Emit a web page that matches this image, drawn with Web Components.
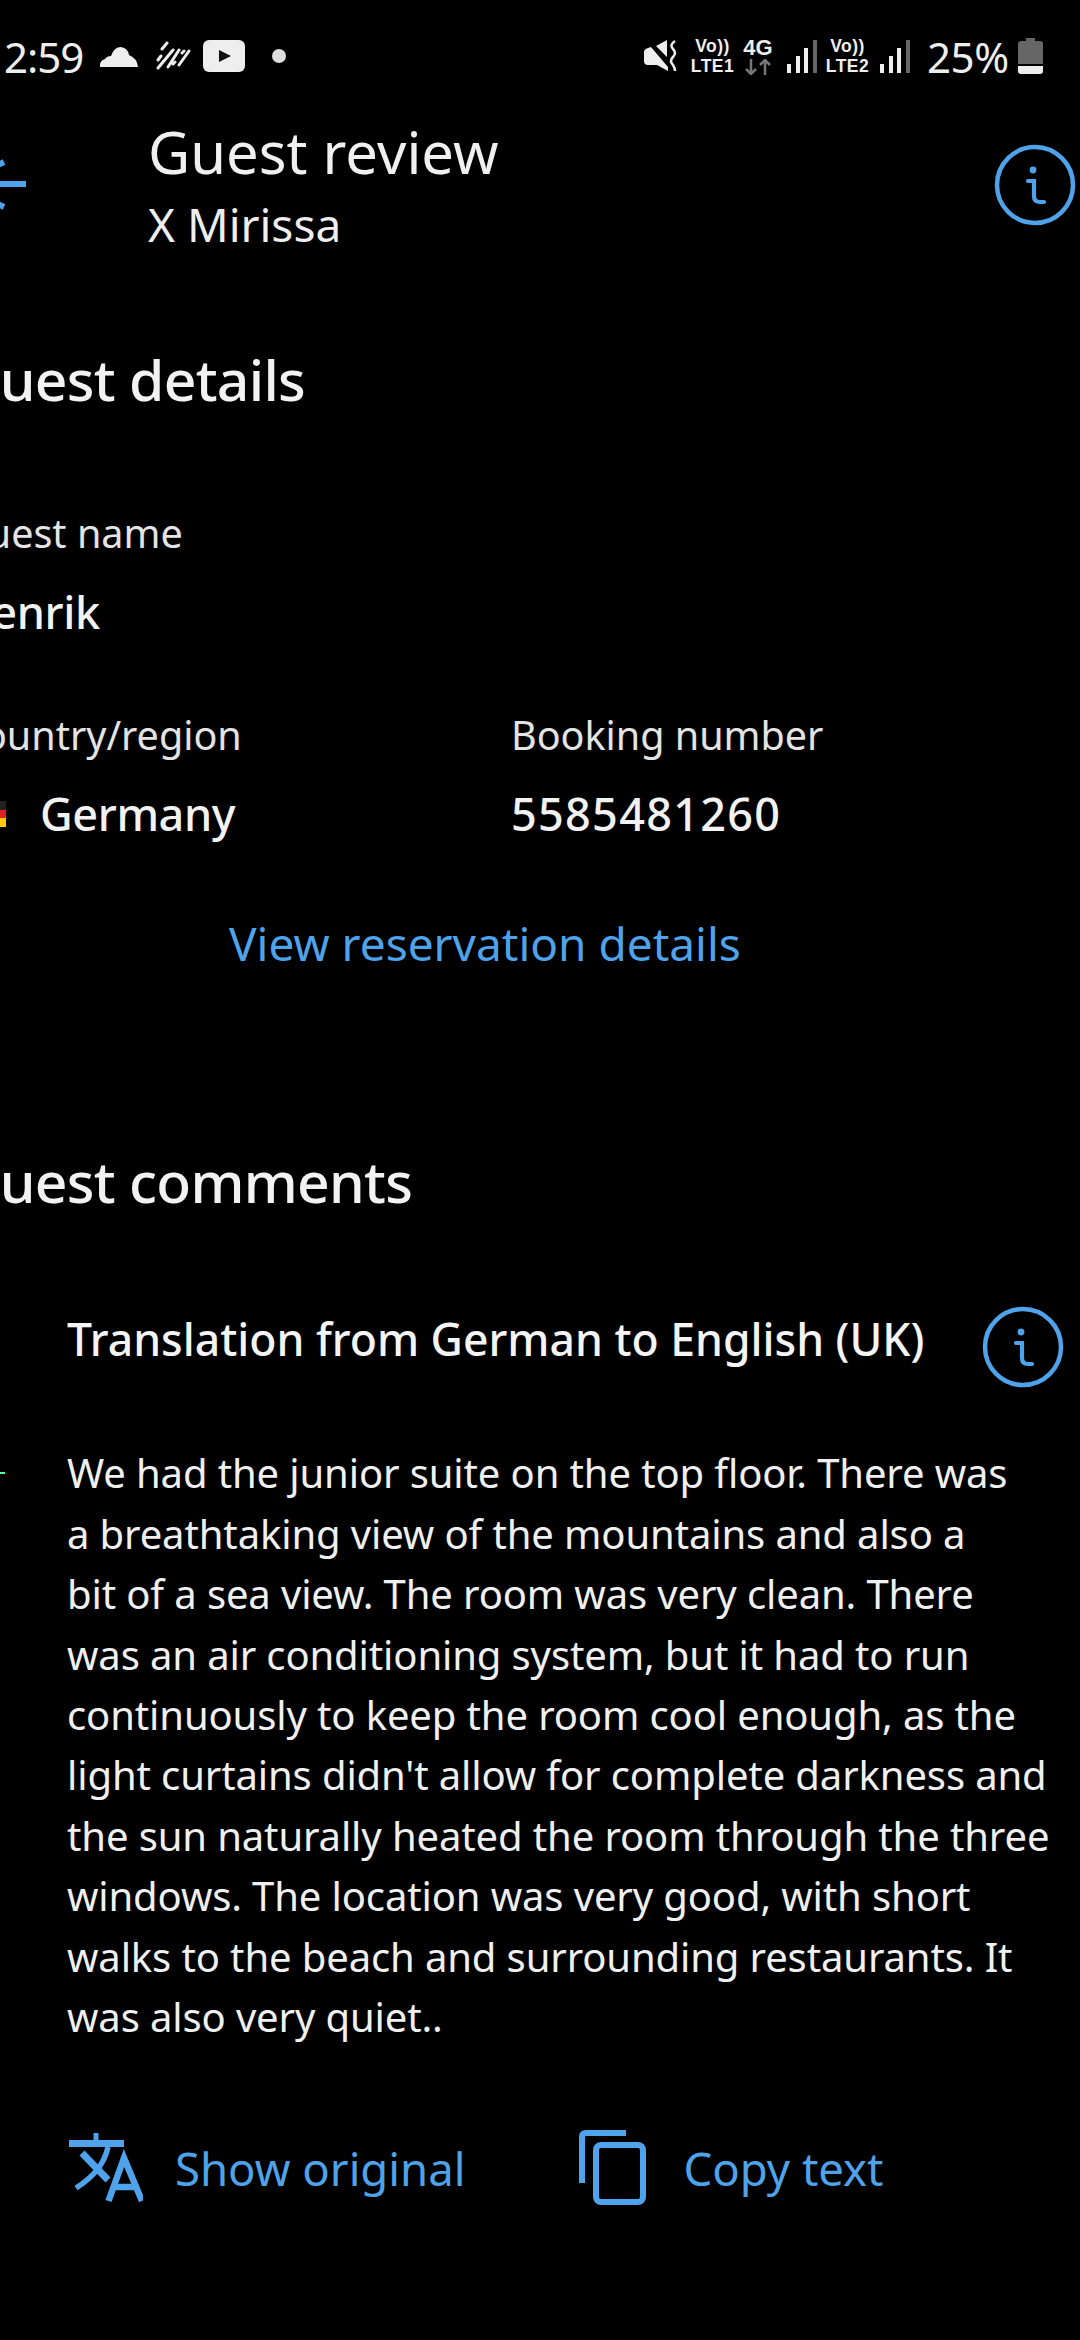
<!DOCTYPE html>
<html>
<head>
<meta charset="utf-8">
<style>
    html, body { margin: 0; background: #000; }
    body { width: 1080px; height: 2340px; overflow: hidden; font-family: "Noto Sans", sans-serif; color: #f2f2f2; }
</style>
</head>
<body>
<review-page></review-page>

<script>
var FONT = `"Noto Sans", "Open Sans", sans-serif`
var BLUE = "#4fa3ea"

var infoIcon = `
<svg viewBox="0 0 82 82" width="82" height="82" fill="none" stroke="${BLUE}" stroke-linecap="round" style="display:block">
    <circle cx="41" cy="41" r="38" stroke-width="4.5"/>
    <circle cx="39" cy="26" r="3.4" fill="${BLUE}" stroke="none"/>
    <path d="M34 37 H40 V52 Q40 58 46 58 H50" stroke-width="4.2"/>
</svg>`

var signalBars = `
<rect x="0" y="24" width="4" height="9" fill="#eee"/><rect x="9" y="16" width="4" height="17" fill="#eee"/><rect x="17" y="8" width="4" height="25" fill="#eee"/><rect x="26" y="0" width="4" height="33" fill="#666"/>`

class StatusBar extends HTMLElement {
    constructor() {
        super()
        this.attachShadow({ mode: "open" }).innerHTML = `
<style>
    :host { display: flex; justify-content: space-between; align-items: center; height: 56px; padding: 28px 37px 0 4px; color: #eee; font-family: ${FONT}; }
    .left, .right { display: flex; align-items: center; }
    .time { font-size: 42px; letter-spacing: -1px; margin-right: 16px; }
    .left svg { display: block; }
    .net { display: flex; flex-direction: column; align-items: center; font-family: "Liberation Sans", sans-serif; font-size: 17.5px; line-height: 20px; font-weight: 700; letter-spacing: 0.5px; }
    .pct { display: inline-block; width: 83px; font-size: 42px; letter-spacing: -0.4px; margin: 0 8px 0 17px; white-space: nowrap; }
    .g4 { font-family: "Liberation Sans", sans-serif; font-size: 22px; line-height: 22px; font-weight: 700; }
    .stack { display: flex; flex-direction: column; align-items: center; width: 28px; margin-left: 10px; }
</style>
<div class="left">
    <span class="time">2:59</span>
    <svg width="40" height="24" viewBox="0 0 40 24" fill="#eee"><path d="M1 23 Q0 17 6 15 Q8 12 12 12 Q15 3 22 3 Q29 4 30 11 Q38 14 39 23 Z"/></svg>
    <svg width="36" height="32" viewBox="0 0 36 32" stroke="#eee" stroke-width="3" stroke-linecap="round" style="margin-left:16px"><path d="M12 3 L7 9 M18 10 L3 28 M24 10 L13 27 M34 11 L24 25 M6 16 L3 20 M20 22 L18 24 M29 11 L27 13"/></svg>
    <svg width="42" height="32" viewBox="0 0 42 32" style="margin-left:12px"><rect width="42" height="32" rx="6" fill="#eee"/><path d="M16 10 L28 16 L16 22 Z" fill="#111"/></svg>
    <svg width="14" height="14" viewBox="0 0 14 14" style="margin-left:27px"><circle cx="7" cy="7" r="7" fill="#ddd"/></svg>
</div>
<div class="right">
    <svg width="33" height="34" viewBox="0 0 33 34" fill="#eee" style="margin-right:14px"><path d="M0 13 Q0 10 4 9 L7 8 L24 28 V32 L13 26 H4 Q0 26 0 22 Z M12 7 L23 1 V18 Z"/><path d="M31 2 Q25 6 29 10 Q33 14 29 18 Q25 22 29 26 Q31 29 31 32" fill="none" stroke="#eee" stroke-width="2.5"/></svg>
    <div class="net" style="width:43px"><span>Vo))</span><span>LTE1</span></div>
    <div class="stack"><span class="g4">4G</span><svg width="28" height="16" viewBox="0 0 28 16" fill="none" stroke="#777" stroke-width="2.5"><path d="M7 0 V15 M2 10 L7 15 L12 10 M21 16 V1 M16 6 L21 1 L26 6"/></svg></div>
    <svg width="30" height="33" viewBox="0 0 30 33" style="margin-left:15px">${signalBars}</svg>
    <div class="net" style="width:45px;margin-left:8px"><span>Vo))</span><span>LTE2</span></div>
    <svg width="30" height="33" viewBox="0 0 30 33" style="margin-left:10px">${signalBars}</svg>
    <span class="pct">25%</span>
    <svg width="25" height="36" viewBox="0 0 25 36"><path d="M8 0 H17 V3 H22 Q25 3 25 6 V26 H0 V6 Q0 3 3 3 H8 Z" fill="#666"/><path d="M0 28 H25 V33 Q25 36 22 36 H3 Q0 36 0 33 Z" fill="#eee"/></svg>
</div>`
    }
}

class AppHeader extends HTMLElement {
    constructor() {
        super()
        this.attachShadow({ mode: "open" }).innerHTML = `
<style>
    :host { display: flex; align-items: flex-start; padding-left: 148px; padding-right: 4px; font-family: ${FONT}; }
    .back { position: absolute; left: 0; top: 155px; }
    .titles { flex: 1; }
    .title { font-size: 58px; line-height: 72px; color: #f0f0f0; }
    .sub { font-size: 46px; line-height: 64px; margin-top: 4px; color: #eee; }
    .info { margin-top: 28px; }
</style>
<svg class="back" width="28" height="60" viewBox="0 0 28 60" fill="none" stroke="${BLUE}" stroke-width="6"><path d="M0 29 H26"/><path d="M-4 11 L4 7 M-4 48 L4 52"/></svg>
<div class="titles">
    <div class="title">Guest review</div>
    <div class="sub">X Mirissa</div>
</div>
<div class="info">${infoIcon}</div>`
    }
}

class SectionTitle extends HTMLElement {
    constructor() {
        super()
        this.attachShadow({ mode: "open" }).innerHTML = `
<style>
    :host { display: block; font-family: ${FONT}; font-size: 57px; line-height: 72px; font-weight: 500; color: #f2f2f2; letter-spacing: -0.7px; margin-left: -41px; }
</style>
<slot></slot>`
    }
}

class FieldItem extends HTMLElement {
    constructor() {
        super()
        this.attachShadow({ mode: "open" }).innerHTML = `
<style>
    :host { display: block; font-family: ${FONT}; }
    .label { font-size: 39.5px; line-height: 56px; color: #e4e4e4; }
    .value { display: flex; align-items: center; font-size: 45px; line-height: 60px; margin-top: 21px; font-weight: 500; color: #f2f2f2; letter-spacing: -0.4px; }
</style>
<div class="label"><slot name="label"></slot></div>
<div class="value"><slot></slot></div>`
    }
}

class ActionLink extends HTMLElement {
    constructor() {
        super()
        this.attachShadow({ mode: "open" }).innerHTML = `
<style>
    :host { display: flex; align-items: center; font-family: ${FONT}; font-size: 45.5px; color: ${BLUE}; line-height: 60px; }
    ::slotted(svg) { display: block; }
</style>
<slot></slot>`
    }
}

class CommentCard extends HTMLElement {
    constructor() {
        super()
        this.attachShadow({ mode: "open" }).innerHTML = `
<style>
    :host { display: block; font-family: ${FONT}; padding-left: 67px; position: relative; }
    .head { display: flex; align-items: center; height: 82px; }
    .head-title { font-size: 44.5px; font-weight: 500; color: #f4f4f4; width: 915px; margin-top: -18px; white-space: nowrap; }
    .body { font-size: 40px; line-height: 60.4px; color: #f0f0f0; margin-top: -5px; white-space: pre-line; letter-spacing: -0.12px; }
    .actions { display: flex; margin-top: 83px; }
    .tick { position: absolute; left: 0; top: 166px; width: 5px; height: 2px; background: #5fa; }
</style>
<div class="tick"></div>
<div class="head"><span class="head-title"><slot name="title"></slot></span>${infoIcon}</div>
<div class="body"><slot></slot></div>
<div class="actions"><slot name="actions"></slot></div>`
    }
}

class ReviewPage extends HTMLElement {
    constructor() {
        super()
        this.attachShadow({ mode: "open" }).innerHTML = `
<style>
    :host { display: block; position: relative; width: 1080px; height: 2340px; overflow: hidden; background: #000; }
    app-header { margin-top: 32px; }
    section-title.details { margin-top: 87px; }
    .name { margin: 90px 0 0 -42px; }
    .row { display: flex; margin: 65px 0 0 -42px; }
    .row field-item:first-child { width: 553px; }
    .flag { display: inline-flex; flex-direction: column; width: 48px; height: 26px; margin-right: 34px; }
    .flag i { flex: 1; }
    .digits { letter-spacing: 1.3px; }
    .link-row { display: flex; padding-left: 229px; margin-top: 69px; }
    .link-row action-link { font-size: 46px; }
    section-title.comments { margin-top: 172px; }
    comment-card { margin-top: 89px; }
    .act-a { margin-left: 2px; }
    .act-a svg { margin-right: 32px; }
    .act-b { margin-left: 114px; }
    .act-b svg { margin-right: 37px; }
</style>
<status-bar></status-bar>
<app-header></app-header>
<section-title class="details">Guest details</section-title>
<div class="name"><field-item><span slot="label">Guest name</span>Henrik</field-item></div>
<div class="row">
    <field-item><span slot="label">Country/region</span><span class="flag"><i style="background:#222"></i><i style="background:#d22"></i><i style="background:#fc0"></i></span>Germany</field-item>
    <field-item><span slot="label">Booking number</span><span class="digits">5585481260</span></field-item>
</div>
<div class="link-row"><action-link>View reservation details</action-link></div>
<section-title class="comments">Guest comments</section-title>
<comment-card>
    <span slot="title">Translation from German to English (UK)</span><span>We had the junior suite on the top floor. There was
a breathtaking view of the mountains and also a
bit of a sea view. The room was very clean. There
was an air conditioning system, but it had to run
continuously to keep the room cool enough, as the
light curtains didn't allow for complete darkness and
the sun naturally heated the room through the three
windows. The location was very good, with short
walks to the beach and surrounding restaurants. It
was also very quiet..</span><action-link slot="actions" class="act-a">
        <svg width="74" height="70" viewBox="0 0 74 70" fill="none" stroke="${BLUE}"><path d="M0 10.5 H55" stroke-width="7"/><path d="M27 0 V8" stroke-width="5"/><path d="M13 20 L39 47" stroke-width="7"/><path d="M39 14 Q34 38 7 55" stroke-width="5.5"/><path d="M39.5 68 L55 25 L73 68 M45 54 H68" stroke-width="6.5"/></svg>
        <span>Show original</span>
    </action-link><action-link slot="actions" class="act-b">
        <svg width="67" height="75" viewBox="0 0 67 75" fill="none" stroke="${BLUE}" stroke-width="6"><path d="M3 53 V7 Q3 3 7 3 H47"/><rect x="17" y="15" width="47" height="57" rx="5"/></svg>
        <span>Copy text</span>
    </action-link>
</comment-card>`
    }
}

window.customElements.define('status-bar', StatusBar)
window.customElements.define('app-header', AppHeader)
window.customElements.define('section-title', SectionTitle)
window.customElements.define('field-item', FieldItem)
window.customElements.define('action-link', ActionLink)
window.customElements.define('comment-card', CommentCard)
window.customElements.define('review-page', ReviewPage)
</script>
</body>
</html>
